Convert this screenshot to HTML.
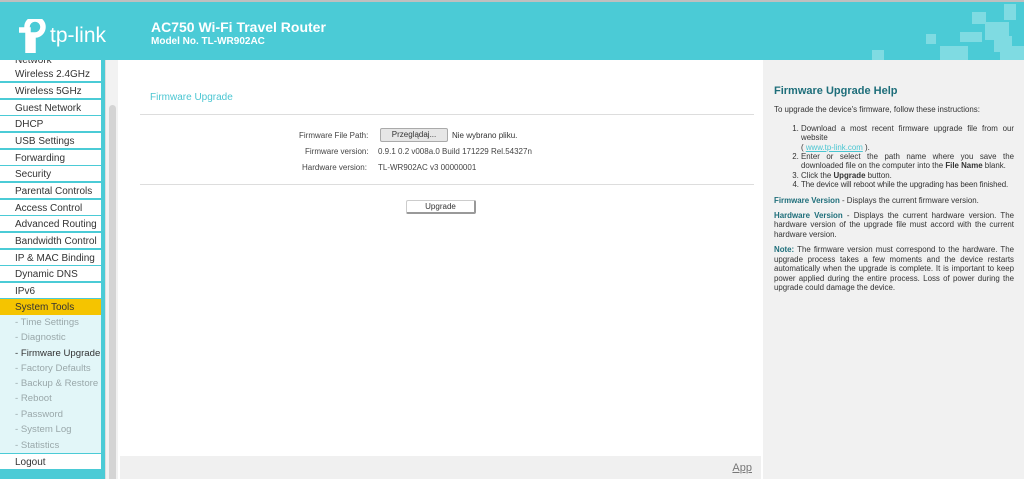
<!DOCTYPE html>
<html><head><meta charset="utf-8"><style>
*{margin:0;padding:0;box-sizing:border-box}
body{width:1024px;height:479px;overflow:hidden;font-family:"Liberation Sans",sans-serif;background:#fff;position:relative}
#top{position:absolute;left:0;top:0;width:1024px;height:60px;background:#4bcbd6;border-top:2px solid #bfbfbf}
.t1{position:absolute;left:151px;top:17px;color:#fff;font-weight:bold;font-size:14px}
.t2{position:absolute;left:151px;top:34px;color:#fff;font-weight:bold;font-size:10px}
.logo{position:absolute;left:16px;top:17px;color:#fff;font-size:22px;white-space:nowrap}
#side{position:absolute;left:0;top:60px;width:105px;height:419px;background:#4bcbd6;overflow:hidden}
.it{position:absolute;left:0;width:101px;height:15px;background:#fff;font-size:10px;color:#333;padding-left:15px;line-height:17px;white-space:nowrap;overflow:hidden}
.sub{position:absolute;left:0;width:101px;height:138px;background:#e2f6f8}
.si{position:absolute;left:15px;font-size:9.6px;color:#9aa8aa;white-space:nowrap}
#sb{position:absolute;left:105px;top:60px;width:13px;height:419px;background:#f2f2f2;border-left:1px solid #ddd;overflow:hidden}
#sb div{position:absolute;left:3px;top:45px;width:7px;height:380px;background:#d4d4d4;border-radius:4px}
#help{position:absolute;left:763px;top:60px;width:261px;height:419px;background:#f1f1f1;font-size:7.9px;color:#333;padding:27px 10px 0 11px;line-height:9.4px;text-align:justify}
#help h3{color:#1e6e7a;font-size:11px;margin-bottom:9px}
.b{color:#1e6e7a;font-weight:bold}
#help ol{margin:9px 0 6px 27px}
#foot{position:absolute;left:120px;top:456px;width:641px;height:23px;background:#f0f0f0}
.lab{position:absolute;font-size:8px;color:#444}
</style></head><body>
<div id="top">
<div class="logo"><svg width="30" height="34" viewBox="0 0 30 34" style="vertical-align:middle"><path d="M3 11 H12 V32 H17 V16 H19 A8 8 0 1 0 11 8 V11" fill="none" stroke="#fff" stroke-width="5.5"/></svg><span style="font-size:21px;vertical-align:middle;margin-left:4px">tp-link</span></div>
<div class="t1">AC750 Wi-Fi Travel Router</div>
<div class="t2">Model No. TL-WR902AC</div>
<svg style="position:absolute;left:860px;top:0" width="164" height="58"><g fill="#7fdbe2"><rect x="144" y="2" width="12" height="16"/><rect x="112" y="10" width="14" height="12"/><rect x="125" y="20" width="24" height="18"/><rect x="134" y="34" width="18" height="16"/><rect x="100" y="30" width="22" height="10"/><rect x="80" y="44" width="28" height="14"/><rect x="12" y="48" width="12" height="10"/><rect x="140" y="44" width="24" height="14"/><rect x="66" y="32" width="10" height="10"/></g></svg>
</div>
<div id="side">
<div class="it" style="top:-8px">Network</div>
<div class="it" style="top:6px">Wireless 2.4GHz</div>
<div class="it" style="top:23px">Wireless 5GHz</div>
<div class="it" style="top:40px">Guest Network</div>
<div class="it" style="top:56px">DHCP</div>
<div class="it" style="top:73px">USB Settings</div>
<div class="it" style="top:90px">Forwarding</div>
<div class="it" style="top:106px">Security</div>
<div class="it" style="top:123px">Parental Controls</div>
<div class="it" style="top:140px">Access Control</div>
<div class="it" style="top:156px">Advanced Routing</div>
<div class="it" style="top:173px">Bandwidth Control</div>
<div class="it" style="top:190px">IP &amp; MAC Binding</div>
<div class="it" style="top:206px">Dynamic DNS</div>
<div class="it" style="top:223px">IPv6</div>
<div class="it" style="top:239px;background:#f5c400;height:16px">System Tools</div>
<div class="sub" style="top:255px">
<div class="si" style="top:2px">- Time Settings</div>
<div class="si" style="top:17px">- Diagnostic</div>
<div class="si" style="top:33px;color:#333">- Firmware Upgrade</div>
<div class="si" style="top:48px">- Factory Defaults</div>
<div class="si" style="top:63px">- Backup &amp; Restore</div>
<div class="si" style="top:78px">- Reboot</div>
<div class="si" style="top:94px">- Password</div>
<div class="si" style="top:109px">- System Log</div>
<div class="si" style="top:125px">- Statistics</div>
</div>
<div class="it" style="top:394px">Logout</div>
</div>
<div id="sb"><div></div></div>
<div style="position:absolute;left:150px;top:92px;color:#4bc6d2;font-size:10px">Firmware Upgrade</div>
<div style="position:absolute;left:140px;top:114px;width:614px;height:1px;background:#ddd"></div>
<div class="lab" style="left:299px;top:131px">Firmware File Path:</div>
<div style="position:absolute;left:380px;top:128px;width:68px;height:14px;background:#e6e6e6;border:1px solid #aaa;border-radius:2px;font-size:8px;text-align:center;line-height:12px;color:#333">Przeglądaj...</div>
<div class="lab" style="left:452px;top:131px;color:#333">Nie wybrano pliku.</div>
<div class="lab" style="left:305px;top:147px">Firmware version:</div>
<div class="lab" style="left:378px;top:147px">0.9.1 0.2 v008a.0 Build 171229 Rel.54327n</div>
<div class="lab" style="left:302px;top:163px">Hardware version:</div>
<div class="lab" style="left:378px;top:163px">TL-WR902AC v3 00000001</div>
<div style="position:absolute;left:140px;top:184px;width:614px;height:1px;background:#ddd"></div>
<div style="position:absolute;left:406px;top:200px;width:70px;height:14px;background:#fff;border:1px solid #ccc;border-right:2px solid #999;border-bottom:2px solid #999;border-radius:2px;font-size:8px;text-align:center;line-height:11px;color:#333">Upgrade</div>
<div id="foot"><span style="position:absolute;right:9px;top:6px;font-size:11px;color:#777;text-decoration:underline">App</span></div>
<div id="help">
<h3>Firmware Upgrade Help</h3>
<p>To upgrade the device's firmware, follow these instructions:</p>
<ol><li>Download a most recent firmware upgrade file from our website<br>( <u style="color:#4bc6d2">www.tp-link.com</u> ).</li>
<li>Enter or select the path name where you save the downloaded file on the computer into the <b>File Name</b> blank.</li>
<li>Click the <b>Upgrade</b> button.</li>
<li style="text-align:left;white-space:nowrap;letter-spacing:-0.1px">The device will reboot while the upgrading has been finished.</li></ol>
<p style="margin-bottom:6px"><span class="b">Firmware Version</span> - Displays the current firmware version.</p>
<p style="margin-bottom:6px"><span class="b">Hardware Version</span> - Displays the current hardware version. The hardware version of the upgrade file must accord with the current hardware version.</p>
<p><span class="b">Note:</span> The firmware version must correspond to the hardware. The upgrade process takes a few moments and the device restarts automatically when the upgrade is complete. It is important to keep power applied during the entire process. Loss of power during the upgrade could damage the device.</p>
</div>
</body></html>
